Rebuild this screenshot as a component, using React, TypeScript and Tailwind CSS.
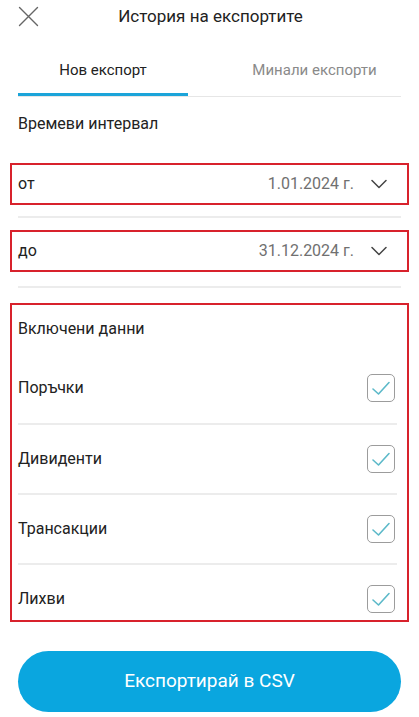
import { useState } from "react";

const items = ["Поръчки", "Дивиденти", "Трансакции", "Лихви"];

function Chevron() {
  return (
    <svg width="16" height="10" viewBox="0 0 16 10" fill="none">
      <path d="M1 1.5 L8 8.5 L15 1.5" stroke="#444" strokeWidth="1.5" strokeLinecap="round" strokeLinejoin="round" />
    </svg>
  );
}

function Check() {
  return (
    <div className="flex h-[28px] w-[28px] items-center justify-center rounded-[5px] border-[1.5px] border-[#9c9c9c]">
      <svg width="20" height="16" viewBox="0 0 20 16" fill="none">
        <path d="M2 9 L7.5 14 L18 2.5" stroke="#5cb9c9" strokeWidth="1.6" strokeLinecap="round" strokeLinejoin="round" />
      </svg>
    </div>
  );
}

function DateRow({ label, value }: { label: string; value: string }) {
  return (
    <div className="mx-[10px] flex h-[42px] items-center border-2 border-[#d8222c] pl-[6px] pr-[20px]">
      <span className="text-[16px] text-[#222]">{label}</span>
      <span className="ml-auto mr-[17px] text-[16px] text-[#707070]">{value}</span>
      <Chevron />
    </div>
  );
}

export default function App() {
  const [tab, setTab] = useState(0);

  return (
    <div className="h-[717px] w-full overflow-hidden bg-white font-['Roboto',sans-serif] text-[#222]">
      {/* header */}
      <div className="relative flex h-[33px] items-center justify-center">
        <svg className="absolute left-[18px] top-[6px]" width="21" height="21" viewBox="0 0 21 21" fill="none">
          <path d="M1.5 1.5 L19.5 19.5 M19.5 1.5 L1.5 19.5" stroke="#666" strokeWidth="1.4" strokeLinecap="round" />
        </svg>
        <span className="pl-[2px] text-[17px] text-[#222]">История на експортите</span>
      </div>

      {/* tabs */}
      <div className="mx-[18px] mt-[17px] flex border-b border-[#e6e6e6]">
        <button
          onClick={() => setTab(0)}
          className={`flex h-[46px] w-[170px] items-center justify-center border-b-[3px] pb-[2px] text-[15px] ${tab === 0 ? "border-[#1ba4d9] text-[#222]" : "border-transparent text-[#8a8a8a]"}`}
        >
          Нов експорт
        </button>
        <button
          onClick={() => setTab(1)}
          className={`flex h-[46px] flex-1 items-center justify-center border-b-[3px] pb-[2px] pl-[40px] text-[15px] ${tab === 1 ? "border-[#1ba4d9] text-[#222]" : "border-transparent text-[#8a8a8a]"}`}
        >
          Минали експорти
        </button>
      </div>

      <div className="flex h-[55px] items-center px-[18px] pb-[2px] text-[16px]">Времеви интервал</div>

      <div className="mt-[11px]">
        <DateRow label="от" value="1.01.2024 г." />
      </div>
      <div className="mx-[18px] mt-[11px] h-[2px] bg-[#ececec]" />
      <div className="mt-[12px]">
        <DateRow label="до" value="31.12.2024 г." />
      </div>
      <div className="mx-[18px] mt-[14px] h-[2px] bg-[#ececec]" />

      <div className="mx-[10px] mt-[15px] h-[319px] overflow-hidden border-2 border-[#d8222c]">
        <div className="flex h-[48px] items-center pl-[6px] text-[16px]">Включени данни</div>
        {items.map((label, i) => (
          <div key={label}>
            {i > 0 && <div className="ml-[6px] mr-[10px] h-[2px] bg-[#ececec]" />}
            <div className={`flex items-center pl-[6px] pr-[12px] ${i > 0 ? "h-[68px]" : "h-[70px]"}`}>
              <span className="text-[16px]">{label}</span>
              <div className="ml-auto">
                <Check />
              </div>
            </div>
          </div>
        ))}
      </div>

      <div className="mx-[18px] mt-[29px]">
        <button className="flex h-[61px] w-full items-center justify-center rounded-full bg-[#0aa6df] text-[19px] text-white">
          Експортирай в CSV
        </button>
      </div>
    </div>
  );
}
